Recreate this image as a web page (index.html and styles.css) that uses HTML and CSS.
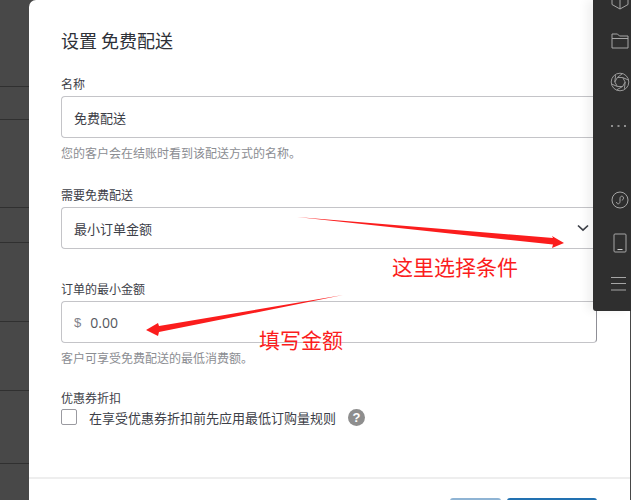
FILE: index.html
```html
<!DOCTYPE html>
<html lang="zh-CN">
<head>
  <meta charset="UTF-8">
  <meta name="viewport" content="width=device-width, initial-scale=1.0">
  <title>设置 免费配送</title>
  <link rel="stylesheet" href="styles.css">
</head>
<body>
  <div class="backdrop">
    <div class="row row-87"></div>
    <div class="row row-33"></div>
    <div class="row row-88"></div>
    <div class="row row-35"></div>
    <div class="row row-79"></div>
    <div class="row row-69"></div>
    <div class="row row-73"></div>
  </div>

  <div class="modal">
    <h1 class="title">设置 免费配送</h1>

    <div class="field">
      <label class="label">名称</label>
      <div class="input">免费配送</div>
      <p class="hint">您的客户会在结账时看到该配送方式的名称。</p>
    </div>

    <div class="field field-select">
      <label class="label">需要免费配送</label>
      <div class="input select">
        <span>最小订单金额</span>
        <svg class="chevron" width="12" height="8" viewBox="0 0 12 8"><path d="M1 1.5 L6 6.2 L11 1.5" fill="none" stroke="#3d4048" stroke-width="1.7"/></svg>
      </div>
    </div>

    <div class="field field-amount">
      <label class="label">订单的最小金额</label>
      <div class="input amount"><span class="currency">$</span><span class="amount-value">0.00</span></div>
      <p class="hint">客户可享受免费配送的最低消费额。</p>
    </div>

    <div class="field field-coupon">
      <label class="label">优惠券折扣</label>
      <div class="check-row">
        <span class="checkbox"></span>
        <span class="check-text">在享受优惠券折扣前先应用最低订购量规则</span>
        <span class="help">?</span>
      </div>
    </div>

    <div class="footer">
      <button class="btn btn-cancel"></button>
      <button class="btn btn-save"></button>
    </div>
  </div>

  <!-- red notes drawn over the screenshot -->
  <svg class="arrows" width="631" height="500" viewBox="0 0 631 500">
    <polygon points="297,217 553,238 552,236 564,243 552,248 553,244.5" fill="#fb1d1d"/>
    <polygon points="343,295 159,326 158,323 146,330 158,336 159,332" fill="#fb1d1d"/>
  </svg>
  <div class="note note-select">这里选择条件</div>
  <div class="note note-amount">填写金额</div>

  <div class="toolbar">
    <svg class="tool tool-cube" width="18" height="22" viewBox="0 0 18 22"><path d="M1 5 V15.5 L9 20 L17 15.5 V5 L9 1 Z M1 5 L9 9.5 L17 5 M9 9.5 V20" fill="none" stroke="#a6a6a6"/></svg>
    <svg class="tool tool-folder" width="18" height="16" viewBox="0 0 18 16"><path d="M1 5.5 V15 H17 V3 H8.5 L6.5 1 H1 V5.5 H17" fill="none" stroke="#a6a6a6"/></svg>
    <svg class="tool tool-aperture" width="20" height="20" viewBox="0 0 20 20"><g fill="none" stroke="#a6a6a6" stroke-width="0.9"><circle cx="10" cy="10" r="8.8"/><path d="M7.4 5.5 L12.4 1.6 M12.6 5.5 L18.4 8 M15.2 10 L14.4 16.8 M12.6 14.5 L6.6 17.9 M7.4 14.5 L1.6 12 M4.8 10 L5.6 3.2 M7.4 5.5 H12.6 L15.2 10 L12.6 14.5 H7.4 L4.8 10 Z"/></g></svg>
    <svg class="tool tool-dots" width="16" height="4" viewBox="0 0 16 4"><g fill="#8f8f8f"><rect x="0" y="1" width="2" height="2"/><rect x="6.5" y="1" width="2" height="2"/><rect x="13" y="1" width="2" height="2"/></g></svg>
    <svg class="tool tool-mini" width="18" height="18" viewBox="0 0 18 18"><g fill="none" stroke="#a6a6a6"><circle cx="9" cy="9" r="8"/><path d="M5.5 11 C5.5 13.5 9 13.5 9 10.5 V7.5 C9 4.5 12.5 4.5 12.5 7 C12.5 8.5 11.5 9 10.8 9.2"/></g></svg>
    <svg class="tool tool-phone" width="14" height="20" viewBox="0 0 14 20"><rect x="1" y="1" width="12" height="18" rx="1" fill="none" stroke="#a6a6a6"/><path d="M4.5 16.5 H9.5" stroke="#d0d0d0"/></svg>
    <svg class="tool tool-menu" width="16" height="16" viewBox="0 0 16 16"><path d="M0 1.5 H15 M0 7.5 H15 M0 14 H15" stroke="#a6a6a6"/></svg>
  </div>
</body>
</html>
```

FILE: styles.css
```css
* {
  box-sizing: border-box;
}
html, body {
  height: 100%;
}
body {
  margin: 0;
  overflow: hidden;
  font-family: "Noto Sans CJK SC", "Noto Sans", "Liberation Sans", sans-serif;
  background-color: #484848;
  color: #3d4048;
}
.backdrop {
  width: 29px;
}
.row {
  border-bottom: 1px solid #303030;
}
.row-87 { height: 87px; }
.row-33 { height: 33px; }
.row-88 { height: 88px; }
.row-35 { height: 35px; }
.row-79 { height: 79px; }
.row-69 { height: 69px; }
.row-73 { height: 73px; }

.modal {
  position: absolute;
  top: 0;
  left: 29px;
  width: 601px;
  height: 560px;
  padding: 27px 33px 0 32px;
  background-color: #fff;
  border-radius: 7px 0 0 0;
}
.title {
  margin: 0;
  font-size: 18px;
  font-weight: 400;
  line-height: 27px;
  color: #2e3138;
}
.field {
  margin-top: 21px;
}
.label {
  display: block;
  font-size: 12px;
  line-height: 18px;
  color: #3d4048;
}
.input {
  display: flex;
  align-items: center;
  height: 42px;
  margin-top: 3px;
  padding: 0 12px;
  border: 1px solid #c4c4c8;
  border-right-color: #8f8f96;
  border-radius: 4px;
  font-size: 13px;
  color: #3d4048;
}
.hint {
  margin: 6px 0 0;
  font-size: 12px;
  line-height: 18px;
  color: #8b8d92;
}
.field-select {
  margin-top: 24px;
}
.select {
  justify-content: space-between;
  padding-right: 7px;
}
.field-amount {
  margin-top: 31px;
}
.currency {
  color: #80828a;
  font-family: "Liberation Sans", sans-serif;
  font-size: 13px;
}
.amount-value {
  margin-left: 9px;
  font-family: "Open Sans", sans-serif;
  font-size: 14px;
  color: #55575e;
}
.field-coupon {
  margin-top: 22px;
}
.check-row {
  display: flex;
  align-items: center;
  height: 18px;
  margin-top: 1px;
}
.checkbox {
  width: 16px;
  height: 16px;
  border: 1px solid #9a9aa0;
  border-radius: 2px;
}
.check-text {
  margin-left: 12px;
  font-size: 13px;
  color: #3d4048;
}
.help {
  display: flex;
  align-items: center;
  justify-content: center;
  width: 17px;
  height: 17px;
  margin-left: 12px;
  border-radius: 50%;
  background-color: #8e8e8e;
  color: #fff;
  font-family: "Liberation Sans", sans-serif;
  font-size: 13px;
  font-weight: 700;
}
.footer {
  display: flex;
  justify-content: flex-end;
  gap: 6px;
  margin: 51px -33px 0 -32px;
  padding: 19px 33px 0 0;
  border-top: 2px solid #eee;
}
.btn {
  height: 36px;
  border: none;
  border-radius: 3px;
}
.btn-cancel {
  width: 51px;
  background-color: #8fb4d4;
}
.btn-save {
  width: 90px;
  background-color: #2271b1;
}

.arrows {
  position: absolute;
  top: 0;
  left: 0;
}
.note {
  position: absolute;
  font-size: 21px;
  line-height: 28px;
  color: #fb1d1d;
}
.note-select {
  top: 252px;
  left: 392px;
}
.note-amount {
  top: 325px;
  left: 259px;
}

.toolbar {
  position: absolute;
  top: 0;
  right: 0;
  width: 38px;
  height: 311px;
  padding-left: 18px;
  background-color: #2f2f2f;
  border-radius: 0 0 0 3px;
  box-shadow: -6px 0 10px rgba(0, 0, 0, 0.06);
}
.tool {
  display: block;
}
.tool-cube { margin-top: -11px; }
.tool-folder { margin-top: 22px; }
.tool-aperture { margin-top: 23px; margin-left: -1px; }
.tool-dots { margin-top: 32px; }
.tool-mini { margin-top: 63px; }
.tool-phone { margin-top: 24px; margin-left: 2px; }
.tool-menu { margin-top: 23px; }
```
